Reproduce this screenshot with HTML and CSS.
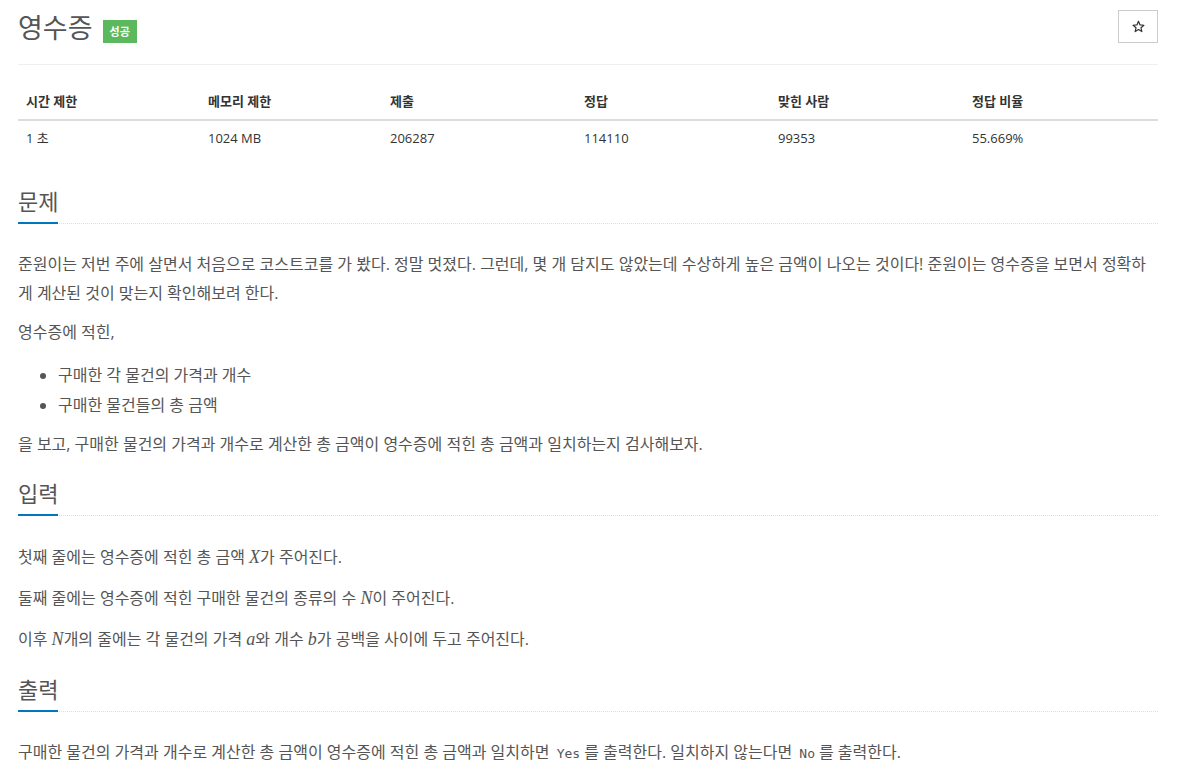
FILE: index.html
```html
<!DOCTYPE html>
<html lang="ko">
<head>
<meta charset="utf-8">
<link rel="stylesheet" href="styles.css">
</head>
<body>
<div class="page">
  <div class="title-row">
    <h1 class="title">영수증 <span class="badge">성공</span></h1>
    <button class="star-btn" aria-label="즐겨찾기">
      <svg width="13" height="13" viewBox="0 0 24 24"><path d="M12 2.5l2.9 6.6 7.1.6-5.4 4.7 1.6 7-6.2-3.8-6.2 3.8 1.6-7L2 9.7l7.1-.6z" fill="none" stroke="#333" stroke-width="2.2" stroke-linejoin="round"/></svg>
    </button>
  </div>
  <hr class="rule">
  <table class="info">
    <thead>
      <tr><th class="c1">시간 제한</th><th class="c1">메모리 제한</th><th>제출</th><th>정답</th><th>맞힌 사람</th><th>정답 비율</th></tr>
    </thead>
    <tbody>
      <tr><td>1 초</td><td>1024 MB</td><td>206287</td><td>114110</td><td>99353</td><td>55.669%</td></tr>
    </tbody>
  </table>

  <section class="sec">
    <div class="headline"><h2>문제</h2></div>
    <div class="text">
      <p>준원이는 저번 주에 살면서 처음으로 코스트코를 가 봤다. 정말 멋졌다. 그런데, 몇 개 담지도 않았는데 수상하게 높은 금액이 나오는 것이다! 준원이는 영수증을 보면서 정확하게 계산된 것이 맞는지 확인해보려 한다.</p>
      <p>영수증에 적힌,</p>
      <ul>
        <li>구매한 각 물건의 가격과 개수</li>
        <li>구매한 물건들의 총 금액</li>
      </ul>
      <p>을 보고, 구매한 물건의 가격과 개수로 계산한 총 금액이 영수증에 적힌 총 금액과 일치하는지 검사해보자.</p>
    </div>
  </section>

  <section class="sec">
    <div class="headline"><h2>입력</h2></div>
    <div class="text">
      <p class="mline">첫째 줄에는 영수증에 적힌 총 금액 <span class="m">X</span>가 주어진다.</p>
      <p class="mline">둘째 줄에는 영수증에 적힌 구매한 물건의 종류의 수 <span class="m">N</span>이 주어진다.</p>
      <p class="mline">이후 <span class="m">N</span>개의 줄에는 각 물건의 가격 <span class="m">a</span>와 개수 <span class="m">b</span>가 공백을 사이에 두고 주어진다.</p>
    </div>
  </section>

  <section class="sec">
    <div class="headline"><h2>출력</h2></div>
    <div class="text">
      <p>구매한 물건의 가격과 개수로 계산한 총 금액이 영수증에 적힌 총 금액과 일치하면 <code>Yes</code>를 출력한다. 일치하지 않는다면 <code>No</code>를 출력한다.</p>
    </div>
  </section>
</div>
</body>
</html>
```

FILE: styles.css
```css
* { box-sizing: border-box; }
html, body { margin: 0; padding: 0; background: #fff; }
body {
  font-family: "Open Sans", "Noto Sans CJK KR", sans-serif;
  color: #333;
  font-size: 13px;
}
.page {
  width: 1140px;
  margin-left: 18px;
  padding-top: 10px;
}
.title-row {
  display: flex;
  justify-content: space-between;
  align-items: flex-start;
}
.title {
  margin: 0;
  font-weight: 400;
  font-size: 27px;
  line-height: 36px;
  color: #555;
  display: flex;
  align-items: center;
}
.badge {
  display: inline-block;
  background: #5cb85c;
  color: #fff;
  font-size: 11px;
  font-weight: 700;
  line-height: 23px;
  height: 23px;
  padding: 0 7px;
  margin-left: 10px;
  margin-top: 6px;
}
.star-btn {
  width: 40px;
  height: 33px;
  border: 1px solid #ccc;
  background: #fff;
  display: flex;
  align-items: center;
  justify-content: center;
  padding: 0;
}
.rule {
  border: 0;
  border-top: 1px solid #eee;
  margin: 18px 0 0;
}
.info {
  width: 100%;
  border-collapse: collapse;
  margin-top: 19px;
  table-layout: fixed;
}
.info th, .info td {
  text-align: left;
  padding: 8px;
  line-height: 19px;
  font-size: 13px;
  color: #333;
}
.info th { font-weight: 700; border-bottom: 2px solid #ddd; width: 194px; }
.info th.c1 { width: 182px; }
.sec { margin-top: 30px; }
.sec + .sec { margin-top: 19px; }
.headline {
  border-bottom: 1px dotted #ddd;
  display: flex;
}
.headline h2 {
  margin: 0;
  font-size: 22px;
  font-weight: 400;
  line-height: 30px;
  color: #555;
  padding-bottom: 6px;
  border-bottom: 2px solid #0076c0;
  margin-bottom: -1px;
}
.text {
  padding-top: 26px;
  font-size: 16px;
  line-height: 29px;
  color: #555;
}
.text p { margin: 0 0 10px; }
.text p.mline { line-height: 31px; }
.text ul { margin: 0 0 10px; padding: 3px 0 0 40px; }
.text li { line-height: 30px; }
.m {
  font-family: "Liberation Serif", "DejaVu Serif", serif;
  font-style: italic;
  font-size: 18px;
  line-height: 1;
}
code {
  font-family: "DejaVu Sans Mono", "Liberation Mono", monospace;
  font-size: 13px;
  padding: 0 4px 0 3px;
  color: #555;
}
```
